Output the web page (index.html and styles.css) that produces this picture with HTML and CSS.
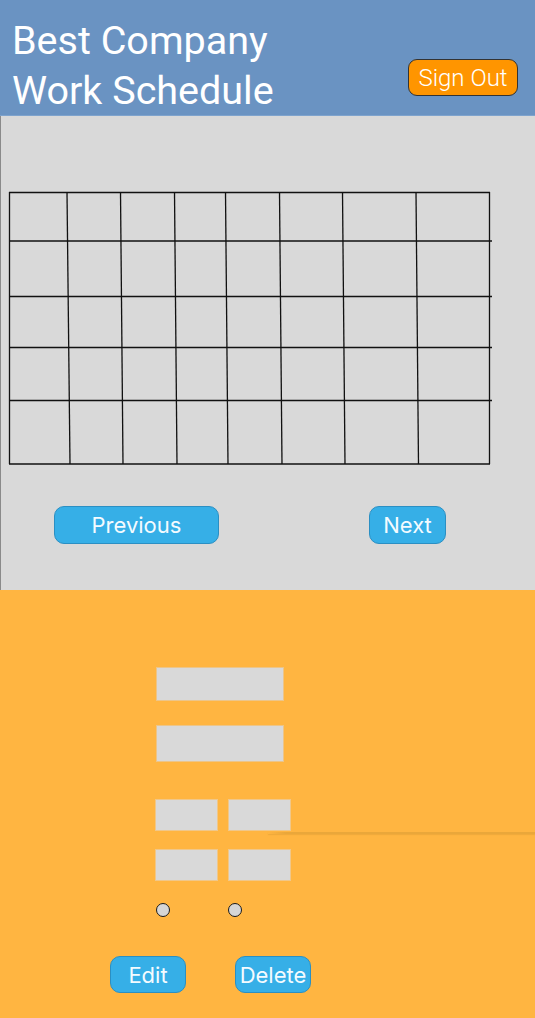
FILE: index.html
```html
<!DOCTYPE html>
<html>
<head>
<meta charset="utf-8">
<link rel="stylesheet" href="styles.css">
</head>
<body>
<header class="topbar">
  <h1 class="title">Best Company<br>Work Schedule</h1>
  <button class="signout">Sign Out</button>
</header>
<section class="calendar">
  <svg class="grid" width="500" height="278" viewBox="0 190 500 278" xmlns="http://www.w3.org/2000/svg">
    <g stroke="#111" stroke-width="1.3" fill="none">
      <line x1="9" y1="192.5" x2="490" y2="192.5"/>
      <line x1="9" y1="241" x2="492" y2="241"/>
      <line x1="9" y1="296.5" x2="492" y2="296.5"/>
      <line x1="9" y1="347.5" x2="492" y2="347.5"/>
      <line x1="9" y1="400.5" x2="492" y2="400.5"/>
      <line x1="9" y1="464" x2="490" y2="464"/>
      <line x1="9.5" y1="192" x2="9.5" y2="464"/>
      <line x1="67" y1="192" x2="70" y2="464"/>
      <line x1="120.5" y1="192" x2="123" y2="464"/>
      <line x1="174.5" y1="192" x2="177" y2="464"/>
      <line x1="225.5" y1="192" x2="228" y2="464"/>
      <line x1="279.5" y1="192" x2="282" y2="464"/>
      <line x1="342.5" y1="192" x2="345" y2="464"/>
      <line x1="416" y1="192" x2="418.5" y2="464"/>
      <line x1="489.5" y1="192" x2="489.5" y2="464"/>
    </g>
  </svg>
  <div class="pager">
    <button class="btn btn-prev">Previous</button>
    <button class="btn btn-next">Next</button>
  </div>
</section>
<section class="editor">
  <div class="field field-a"></div>
  <div class="field field-b"></div>
  <div class="pair pair-top">
    <div class="small"></div>
    <div class="small"></div>
  </div>
  <div class="rule"></div>
  <div class="pair pair-bottom">
    <div class="small"></div>
    <div class="small"></div>
  </div>
  <div class="radios">
    <span class="radio"></span>
    <span class="radio"></span>
  </div>
  <div class="actions">
    <button class="btn btn-edit">Edit</button>
    <button class="btn btn-delete">Delete</button>
  </div>
</section>
</body>
</html>
```
FILE: styles.css
```css
* { box-sizing: border-box; }
html, body { margin: 0; padding: 0; }
body {
  width: 535px;
  height: 1018px;
  overflow: hidden;
  font-family: Roboto, "Liberation Sans", sans-serif;
  background: #ffb541;
}
.topbar {
  height: 116px;
  background: #6a93c2;
  box-shadow: inset 0 -1px 0 #7ea3cd;
  display: flex;
  justify-content: space-between;
  padding: 16px 17px 0 12px;
}
.title {
  margin: 0;
  font-weight: 400;
  font-size: 39.5px;
  line-height: 50px;
  color: #fff;
  letter-spacing: 0;
}
.signout {
  align-self: flex-end;
  margin-bottom: 20px;
  width: 110px;
  height: 37px;
  background: #ff9500;
  border: 1.5px solid #333;
  border-radius: 9px;
  color: #fff;
  font-family: Roboto, "Liberation Sans", sans-serif;
  font-weight: 300;
  font-size: 24px;
  padding: 0;
}
.calendar {
  height: 474px;
  background: #d9d9d9;
  box-shadow: inset 1px 0 0 #8a8a8a;
  padding-top: 74px;
}
.grid { display: block; }
.pager {
  display: flex;
  justify-content: space-between;
  padding: 0 89px 0 54px;
  margin-top: 38px;
}
.btn {
  height: 38px;
  background: #36afe7;
  border: 1px solid #2b8fc3;
  border-radius: 10px;
  color: #f4fbff;
  font-family: Inter, "Noto Sans", sans-serif;
  font-size: 22px;
  font-weight: 400;
  padding: 0;
}
.btn-prev { width: 165px; }
.btn-next { width: 77px; }
.editor {
  height: 428px;
  padding-top: 77px;
}
.field {
  background: #d9d9d9;
  border: 1px solid #ecc58a;
  width: 128px;
  margin-left: 156px;
}
.field-a { height: 34px; }
.field-b { height: 37px; margin-top: 24px; }
.pair {
  display: flex;
  gap: 10px;
  margin-left: 155px;
}
.pair-top { margin-top: 37px; }
.small {
  width: 63px;
  height: 32px;
  background: #d9d9d9;
  border: 1px solid #f0c78a;
}
.rule {
  height: 2px;
  margin: 1px 0 15px 268px;
  background: linear-gradient(to right, rgba(232,166,58,0) 0, #eaa73a 18px, #eaa73a 100%);
  box-shadow: 0 1px 1px rgba(210,150,50,0.35);
}
.radios {
  display: flex;
  gap: 58px;
  margin: 22px 0 0 156px;
}
.radio {
  width: 14px;
  height: 14px;
  border-radius: 50%;
  background: #d6d6d6;
  border: 1.5px solid #1a1a1a;
}
.actions {
  display: flex;
  gap: 49px;
  margin: 39px 0 0 110px;
}
.btn-edit, .btn-delete { width: 76px; height: 37px; }
```
